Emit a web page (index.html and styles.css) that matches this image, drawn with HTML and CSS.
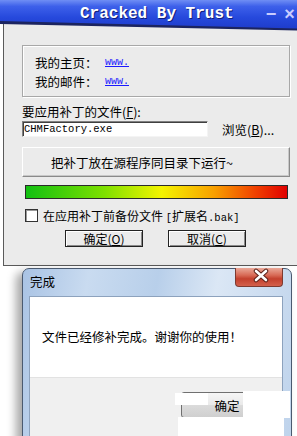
FILE: index.html
```html
<!DOCTYPE html>
<html lang="zh">

<head>
  <meta charset="UTF-8" />
  <title>Cracked By Trust</title>
  <link rel="stylesheet" href="styles.css">
</head>

<body>
  <div class="patcher">
    <div class="titlebar">
      <div class="titlebar-in">
        <span class="title">Cracked By Trust</span>
        <span class="ctl ctl-min">−</span>
        <span class="ctl ctl-x">×</span>
      </div>
    </div>
    <div class="panel">
      <div class="info">
        <div class="info-row"><span class="label">我的主页：</span><a class="link" href="#">www.</a></div>
        <div class="info-row"><span class="label">我的邮件：</span><a class="link" href="#">www.</a></div>
      </div>
      <div class="field-label">要应用补丁的文件(<u>F</u>):</div>
      <div class="file-row">
        <div class="file-input">CHMFactory.exe</div>
        <span class="browse">浏览(<u>B</u>)...</span>
      </div>
      <div class="run-btn">把补丁放在源程序同目录下运行~</div>
      <div class="progress"></div>
      <div class="backup">
        <span class="check"></span>
        <span>在应用补丁前备份文件 <span class="mono">[</span>扩展名<span class="mono">.bak]</span></span>
      </div>
      <div class="actions">
        <div class="btn">确定(<u>O</u>)</div>
        <div class="btn">取消(<u>C</u>)</div>
      </div>
    </div>
  </div>

  <div class="done">
    <div class="done-head">
      <span class="done-title">完成</span>
      <span class="close">
        <svg width="48" height="19" viewBox="0 0 48 19">
          <path d="M21 3 L31 12 M31 3 L21 12" stroke="#5a2018" stroke-width="4.5" stroke-linecap="round" />
          <path d="M21 3 L31 12 M31 3 L21 12" stroke="#fff" stroke-width="2.6" stroke-linecap="round" />
        </svg>
      </span>
    </div>
    <div class="done-body">
      <div class="done-msg">文件已经修补完成。谢谢你的使用！</div>
      <div class="done-foot">
        <div class="ok">确定</div>
      </div>
    </div>
  </div>

  <!-- white patches over the screenshot -->
  <div class="mask mask-a"></div>
  <div class="mask mask-b"></div>
  <div class="mask mask-c"></div>
</body>

</html>
```

FILE: styles.css
```css
* {
  box-sizing: border-box;
}

html,
body {
  margin: 0;
  padding: 0;
}

body {
  position: relative;
  width: 297px;
  height: 436px;
  overflow: hidden;
  background: #fff;
  color: #000;
  font-family: "Noto Sans CJK SC", "Liberation Sans", sans-serif;
  font-size: 12.5px;
}

u {
  text-decoration: underline;
}

.mono {
  font-family: "Liberation Mono", monospace;
  font-size: 10.5px;
}

/* Patch window */
.patcher {
  width: 320px;
}

.titlebar {
  position: relative;
  z-index: 1;
  height: 31px;
  background: #1b2460;
  clip-path: polygon(0 0, 100% 0, 100% 31px, 0 24px);
}

.titlebar-in {
  display: flex;
  align-items: center;
  height: 29px;
  padding: 0 0 1px 80px;
  background: linear-gradient(#6f8ef4 0%, #3d60ea 22%, #2649dc 60%, #1e3ccb 100%);
  clip-path: polygon(0 0, 100% 0, 100% 29px, 0 21px);
}

.title {
  font-family: "Liberation Mono", monospace;
  font-weight: bold;
  font-size: 16px;
  color: #fff;
  text-shadow: 1px 1px 0 #10207a;
}

.ctl {
  font-family: "Liberation Sans", sans-serif;
  font-weight: bold;
  font-size: 18px;
  color: #c9ccff;
}

.ctl-min {
  margin-left: 32px;
}

.ctl-x {
  margin-left: 8px;
}

.panel {
  margin: -8px 0 0 3px;
  padding: 22px 0 18px 18px;
  background: #ebebeb;
  border-left: 1px solid #5a5a5a;
  border-bottom: 1px solid #5a5a5a;
}

.info {
  width: 268px;
  height: 52px;
  padding: 7px 0 0 12px;
  border: 1px solid #a8a8a8;
  box-shadow: inset 1px 1px 0 #fff, 1px 1px 0 #fff;
}

.info-row {
  display: flex;
  align-items: center;
  height: 19px;
}

.label {
  width: 70px;
}

.link {
  font-family: "Liberation Mono", monospace;
  font-size: 10px;
  color: #1a1aff;
  text-decoration: underline;
}

.field-label {
  margin-top: 7px;
  height: 16px;
  line-height: 16px;
}

.file-row {
  display: flex;
  align-items: center;
  margin-top: 1px;
  height: 16px;
}

.file-input {
  width: 186px;
  height: 16px;
  padding-left: 1px;
  background: #fff;
  border: 1px solid;
  border-color: #808080 #f4f4f4 #f4f4f4 #808080;
  box-shadow: inset 1px 1px 0 #404040;
  font-family: "Liberation Mono", monospace;
  font-size: 10.5px;
  line-height: 14px;
}

.browse {
  margin-left: 14px;
}

.run-btn {
  display: flex;
  align-items: center;
  width: 268px;
  height: 30px;
  margin-top: 10px;
  padding-left: 28px;
  font-size: 12.5px;
  border: 1px solid;
  border-color: #fff #8a8a8a #8a8a8a #fff;
  box-shadow: inset -1px -1px 0 #c8c8c8;
}

.progress {
  width: 263px;
  height: 14px;
  margin: 8px 0 0 3px;
  border: 1px solid #2a2a2a;
  background: linear-gradient(to right, #12c012, #7ee000 30%, #f4f400 52%, #f8a000 72%, #f04000 88%, #e00000);
}

.backup {
  display: flex;
  align-items: center;
  gap: 5px;
  height: 14px;
  margin: 9px 0 0 3px;
  font-size: 12px;
}

.check {
  width: 13px;
  height: 13px;
  background: #fff;
  border: 1px solid #333;
  box-shadow: inset 1px 1px 0 #999;
}

.actions {
  display: flex;
  gap: 25px;
  margin: 8px 0 0 43px;
}

.btn {
  display: flex;
  align-items: center;
  justify-content: center;
  width: 78px;
  height: 17px;
  font-size: 12px;
  border: 1px solid #222;
  box-shadow: inset 1px 1px 0 #fff, inset -1px -1px 0 #8a8a8a;
}

/* Finished dialog */
.done {
  width: 270px;
  height: 200px;
  margin: 2px 0 0 22px;
  padding: 0 8px 0 6px;
  border: 1px solid #4a5a70;
  border-radius: 7px 7px 0 0;
  background: linear-gradient(100deg, #a9c3e4 0%, #c9dbf0 22%, #b8cfea 45%, #dbe7f5 65%, #bdd2eb 100%);
  box-shadow: -6px 4px 10px rgba(0, 0, 0, 0.35);
}

.done-head {
  display: flex;
  align-items: flex-start;
  height: 27px;
}

.done-title {
  padding-left: 1px;
  line-height: 26px;
}

.close {
  display: block;
  width: 48px;
  height: 19px;
  margin: -1px 0 0 auto;
  border: 1px solid #7d3a30;
  border-top: none;
  border-radius: 0 0 4px 4px;
  background: linear-gradient(#eaa898 0%, #d86a56 40%, #c3402d 60%, #d3604c 100%);
}

.close svg {
  display: block;
  margin-left: -1px;
}

.done-body {
  border: 1px solid #8da2bd;
  background: #fff;
}

.done-msg {
  height: 80px;
  padding: 32px 0 0 12px;
  line-height: 16px;
}

.done-foot {
  display: flex;
  justify-content: flex-end;
  height: 60px;
  padding: 14px 9px 0 0;
  background: #f0f0f0;
  border-top: 1px solid #e2e2e2;
}

.ok {
  display: flex;
  align-items: center;
  justify-content: center;
  width: 92px;
  height: 26px;
  border: 1px solid #707070;
  border-radius: 3px;
  background: linear-gradient(#f6f6f6, #e9e9e9 50%, #dbdbdb 51%, #cfcfcf);
}

.mask {
  position: absolute;
  background: #fff;
}

.mask-a {
  left: 175px;
  top: 393px;
  width: 33px;
  height: 12px;
}

.mask-b {
  left: 243px;
  top: 391px;
  width: 47px;
  height: 27px;
}

.mask-c {
  left: 178px;
  top: 417px;
  width: 106px;
  height: 19px;
}
```
